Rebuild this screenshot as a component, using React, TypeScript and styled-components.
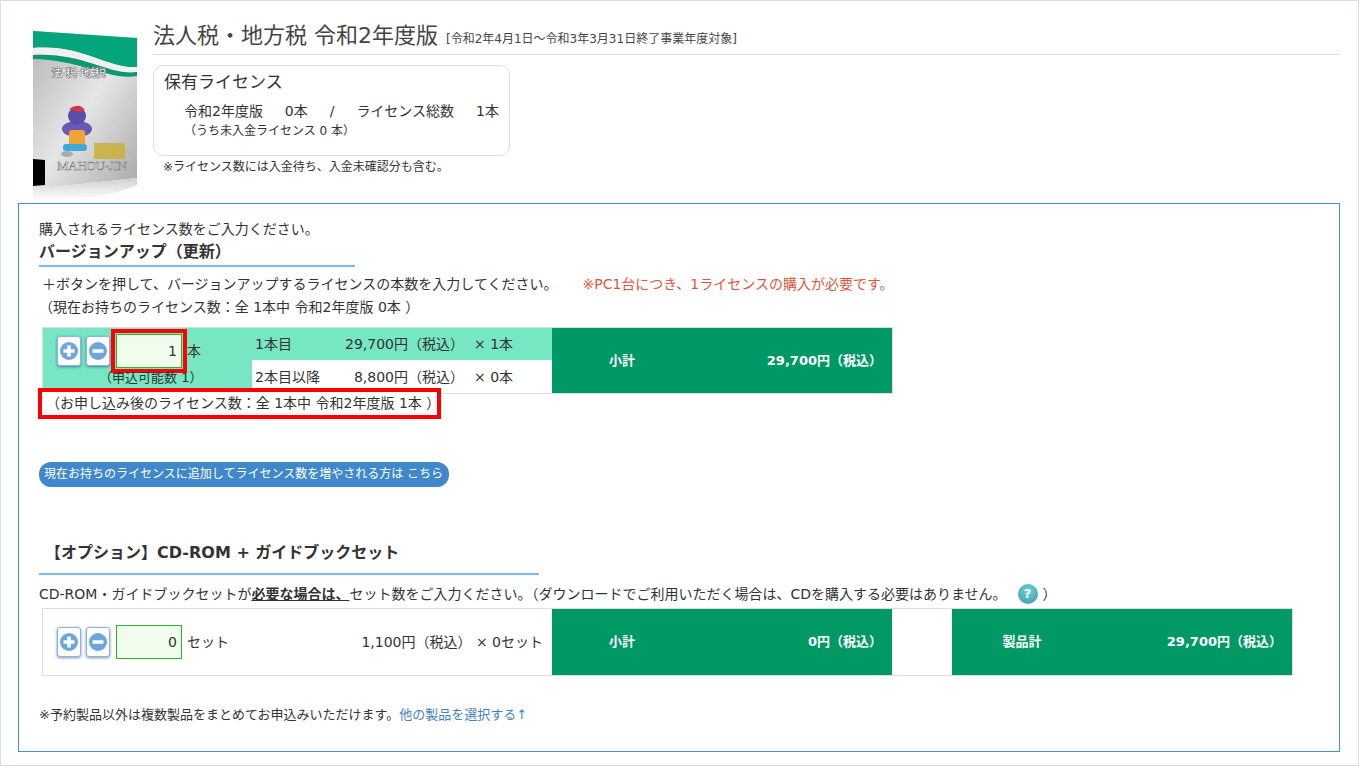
import styled, { createGlobalStyle } from 'styled-components';

const GlobalStyle = createGlobalStyle`
  html, body {
    margin: 0;
    padding: 0;
    background: #fff;
  }
  * {
    box-sizing: border-box;
  }
  body {
    font-family: "DejaVu Sans", "Noto Sans CJK JP", sans-serif;
    font-size: 14px;
    line-height: 20px;
    color: #333;
  }
`;

const Frame = styled.div`
  width: 1359px;
  height: 766px;
  overflow: hidden;
  border: 1px solid #d6dee6;
  padding: 19px 18px 0 17px;
`;

const Header = styled.header`
  display: flex;
  height: 183px;
`;

const BoxArt = styled.svg`
  flex: none;
  width: 104px;
  height: 170px;
  margin: 10px 16px 0 15px;
`;

const HeaderBody = styled.div`
  flex: 1;
`;

const TitleRow = styled.div`
  height: 35px;
  display: flex;
  align-items: baseline;
  gap: 8px;
  padding-top: 2px;
  border-bottom: 1px solid #ddd;
`;

const Title = styled.h1`
  margin: 0;
  font-size: 22px;
  line-height: 28px;
  font-weight: 400;
  color: #444;
`;

const TitleNote = styled.span`
  font-size: 12px;
  color: #444;
`;

const LicenseBox = styled.div`
  width: 357px;
  height: 91px;
  margin-top: 10px;
  padding: 5px 10px;
  border: 1px solid #ddd;
  border-radius: 10px;
`;

const LicenseTitle = styled.div`
  font-size: 17px;
  line-height: 22px;
`;

const LicenseLine = styled.div`
  display: flex;
  justify-content: space-between;
  margin: 7px 0 0 20px;
  line-height: 22px;
`;

const LicenseSub = styled.div`
  margin: 1px 0 0 20px;
  font-size: 12px;
  line-height: 16px;
`;

const LicenseNote = styled.div`
  margin: 1px 0 0 10px;
  font-size: 12px;
`;

const Panel = styled.main`
  height: 549px;
  padding: 15px 20px 0;
  border: 1px solid #3f94d0;
`;

const Lead = styled.p`
  margin: 0;
  line-height: 20px;
`;

const SectionHeading = styled.h2<{ $width: number }>`
  width: ${({ $width }) => $width}px;
  height: 28px;
  margin: 0;
  font-size: 16px;
  line-height: 25px;
  font-weight: 700;
  color: #333;
  border-bottom: 2px solid #7db8ea;
`;

const InstructionRow = styled.div`
  display: flex;
  gap: 25px;
  margin: 7px 0 0 3px;
`;

const Warning = styled.span`
  color: #e2563b;
`;

const CurrentCount = styled.div`
  margin: 3px 0 10px;
`;

const OrderTable = styled.div`
  display: grid;
  grid-template-columns: 209px 300px 340px;
  width: 851px;
  height: 67px;
  margin-left: 3px;
  border: 1px solid #ddd;
  border-top-color: #ddd;
`;

const QuantityCell = styled.div`
  background: #76e6c3;
  padding-top: 6px;
`;

const Controls = styled.div`
  display: flex;
  align-items: center;
  gap: 5px;
  padding-left: 14px;
`;

const StepButton = styled.button`
  flex: none;
  width: 24px;
  height: 30px;
  padding: 0;
  display: grid;
  place-items: center;
  background: #fff;
  border: 1px solid #8db2e4;
  border-radius: 3px;
  box-shadow: 0 1px 3px rgba(40, 70, 110, 0.6);
`;

const QuantityInput = styled.input<{ $highlight?: boolean }>`
  width: 66px;
  height: 34px;
  margin-left: 1px;
  padding: 0 4px;
  font: inherit;
  color: #333;
  text-align: right;
  background: #f0fdec;
  border: 1px solid #2fb52a;
  border-radius: 0;
  outline: ${({ $highlight }) => ($highlight ? '4px solid #f00' : 'none')};
  outline-offset: 1px;
`;

const Unit = styled.span`
  margin-left: 0;
`;

const Available = styled.div`
  margin-top: 1px;
  padding-left: 56px;
  line-height: 18px;
  font-size: 13px;
`;

const PriceCell = styled.div`
  display: grid;
  grid-template-rows: 32px 1fr;
`;

const PriceRow = styled.div<{ $tint?: boolean }>`
  display: grid;
  grid-template-columns: 84px 125px 1fr;
  align-items: center;
  padding-left: 3px;
  background: ${({ $tint }) => ($tint ? '#76e6c3' : '#fff')};
`;

const PriceAmount = styled.span`
  text-align: right;
  white-space: nowrap;
`;

const PriceCount = styled.span`
  padding-left: 10px;
  white-space: nowrap;
`;

const TotalCell = styled.div`
  display: grid;
  grid-template-columns: 140px 1fr;
  align-items: center;
  padding-right: 10px;
  background: #009966;
  color: #fff;
  font-size: 13px;
  font-weight: 700;
`;

const TotalLabel = styled.span`
  text-align: center;
`;

const TotalValue = styled.span`
  text-align: right;
`;

const AfterCount = styled.div`
  position: relative;
  width: 403px;
  height: 31px;
  margin: -6px 0 0 -1px;
  padding: 1px 0 0 4px;
  line-height: 21px;
  border: 4px solid #f00;
  background: #fff;
  white-space: nowrap;
`;

const AddLink = styled.a`
  display: block;
  width: 410px;
  height: 25px;
  margin-top: 43px;
  padding: 0 5px;
  font-size: 12px;
  line-height: 24px;
  color: #fff;
  text-decoration: none;
  white-space: nowrap;
  background: #3f88c9;
  border-radius: 12px;
`;

const OptionSection = styled.section`
  margin-top: 53px;
`;

const OptionHeading = styled(SectionHeading)`
  height: 35px;
  padding-left: 6px;
`;

const OptionLead = styled.div`
  display: flex;
  align-items: center;
  margin-top: 9px;
  white-space: nowrap;
`;

const HelpIcon = styled.span`
  display: inline-grid;
  place-items: center;
  width: 20px;
  height: 20px;
  margin: 0 5px 0 11px;
  color: #fff;
  font-size: 13px;
  font-weight: 700;
  border-radius: 50%;
  background: radial-gradient(circle at 50% 35%, #6fd3d3, #3b97a8);
`;

const OptionTable = styled.div`
  display: grid;
  grid-template-columns: 509px 340px 60px 340px;
  width: 1251px;
  height: 68px;
  margin: 4px 0 0 3px;
  border: 1px solid #ddd;
`;

const OptionQuantity = styled.div`
  display: flex;
  align-items: center;
  padding-left: 14px;
  gap: 5px;
`;

const SetPrice = styled.span`
  margin-left: auto;
  padding-right: 9px;
  white-space: nowrap;
`;

const SetUnit = styled.span`
  margin-left: 0;
`;

const Footnote = styled.p`
  margin: 29px 0 0;
  font-size: 13px;
`;

const FootLink = styled.a`
  color: #3f7fc4;
  text-decoration: none;
`;

function CircleIcon({ minus }: { minus?: boolean }) {
  return (
    <svg width="18" height="18" viewBox="0 0 18 18" aria-hidden="true">
      <circle cx="9" cy="9" r="9" fill="#6ea5dc" />
      <rect x="3.5" y="7.2" width="11" height="3.6" fill="#fff" rx="0.5" />
      {!minus && <rect x="7.2" y="3.5" width="3.6" height="11" fill="#fff" rx="0.5" />}
    </svg>
  );
}

function ProductBox() {
  return (
    <BoxArt viewBox="0 0 104 170" aria-hidden="true">
      <defs>
        <linearGradient id="face" x1="0" y1="0" x2="1" y2="1">
          <stop offset="0" stopColor="#b4b4b4" />
          <stop offset="0.5" stopColor="#e6e6e6" />
          <stop offset="1" stopColor="#a8a8a8" />
        </linearGradient>
        <linearGradient id="reflect" x1="0" y1="0" x2="0" y2="1">
          <stop offset="0" stopColor="#cfcfcf" />
          <stop offset="1" stopColor="#fff" />
        </linearGradient>
      </defs>
      <path d="M0 1 L104 8 V148 L0 159 Z" fill="url(#face)" />
      <path d="M0 1 L104 8 V37 C76 40 50 14 0 18 Z" fill="#04a57c" />
      <path d="M0 18 C50 14 76 40 104 37 V42 C76 46 50 22 0 25 Z" fill="#f0f0f0" />
      <path d="M0 25 C50 22 76 46 104 42 V46 C76 51 50 30 0 29 Z" fill="#0a9a70" />
      <path d="M0 129 L12 130 V155 L0 156 Z" fill="#000" />
      <path d="M0 159 L104 148 V155 C70 170 30 170 0 170 Z" fill="url(#reflect)" />
      <text x="18" y="47" fontSize="11.5" fontWeight="700" fill="#fff" stroke="#555" strokeWidth="0.4" textLength="55">
        法人税・地方税
      </text>
      <ellipse cx="44" cy="99" rx="15" ry="8" fill="#6a57b8" />
      <circle cx="44" cy="86" r="9" fill="#5c4da8" />
      <path d="M36 79 Q46 72 52 80 L46 82 Z" fill="#d8353f" />
      <rect x="36" y="100" width="16" height="17" rx="3" fill="#f0a532" />
      <rect x="30" y="114" width="24" height="7" rx="3" fill="#3fa8d8" />
      <ellipse cx="34" cy="124" rx="6" ry="3" fill="#aaa" />
      <rect x="61" y="113" width="31" height="16" fill="#c9b23a" opacity="0.85" />
      <text x="24" y="140" fontSize="13" fontFamily="Liberation Serif" fill="#f4f4f4" stroke="#777" strokeWidth="0.5" textLength="70">
        MAHOU-JIN
      </text>
    </BoxArt>
  );
}

export default function App() {
  return (
    <Frame>
      <GlobalStyle />
      <Header>
        <ProductBox />
        <HeaderBody>
          <TitleRow>
            <Title>法人税・地方税 令和2年度版</Title>
            <TitleNote>[令和2年4月1日～令和3年3月31日終了事業年度対象]</TitleNote>
          </TitleRow>
          <LicenseBox>
            <LicenseTitle>保有ライセンス</LicenseTitle>
            <LicenseLine>
              <span>令和2年度版</span>
              <span>0本</span>
              <span>/</span>
              <span>ライセンス総数</span>
              <span>1本</span>
            </LicenseLine>
            <LicenseSub>（うち未入金ライセンス 0 本）</LicenseSub>
          </LicenseBox>
          <LicenseNote>※ライセンス数には入金待ち、入金未確認分も含む。</LicenseNote>
        </HeaderBody>
      </Header>

      <Panel>
        <Lead>購入されるライセンス数をご入力ください。</Lead>
        <SectionHeading $width={316}>バージョンアップ（更新）</SectionHeading>
        <InstructionRow>
          <span>＋ボタンを押して、バージョンアップするライセンスの本数を入力してください。</span>
          <Warning>※PC1台につき、1ライセンスの購入が必要です。</Warning>
        </InstructionRow>
        <CurrentCount>（現在お持ちのライセンス数：全 1本中 令和2年度版 0本 ）</CurrentCount>

        <OrderTable>
          <QuantityCell>
            <Controls>
              <StepButton aria-label="増やす">
                <CircleIcon />
              </StepButton>
              <StepButton aria-label="減らす">
                <CircleIcon minus />
              </StepButton>
              <QuantityInput $highlight defaultValue="1" />
              <Unit>本</Unit>
            </Controls>
            <Available>（申込可能数 1）</Available>
          </QuantityCell>
          <PriceCell>
            <PriceRow $tint>
              <span>1本目</span>
              <PriceAmount>29,700円（税込）</PriceAmount>
              <PriceCount>× 1本</PriceCount>
            </PriceRow>
            <PriceRow>
              <span>2本目以降</span>
              <PriceAmount>8,800円（税込）</PriceAmount>
              <PriceCount>× 0本</PriceCount>
            </PriceRow>
          </PriceCell>
          <TotalCell>
            <TotalLabel>小計</TotalLabel>
            <TotalValue>29,700円（税込）</TotalValue>
          </TotalCell>
        </OrderTable>
        <AfterCount>（お申し込み後のライセンス数：全 1本中 令和2年度版 1本 ）</AfterCount>

        <AddLink href="#">現在お持ちのライセンスに追加してライセンス数を増やされる方は こちら</AddLink>

        <OptionSection>
          <OptionHeading $width={500}>【オプション】CD-ROM + ガイドブックセット</OptionHeading>
          <OptionLead>
            CD-ROM・ガイドブックセットが
            <b>
              <u>必要な場合は、</u>
            </b>
            セット数をご入力ください。（ダウンロードでご利用いただく場合は、CDを購入する必要はありません。
            <HelpIcon>?</HelpIcon>）
          </OptionLead>
          <OptionTable>
            <OptionQuantity>
              <StepButton aria-label="増やす">
                <CircleIcon />
              </StepButton>
              <StepButton aria-label="減らす">
                <CircleIcon minus />
              </StepButton>
              <QuantityInput defaultValue="0" />
              <SetUnit>セット</SetUnit>
              <SetPrice>1,100円（税込） × 0セット</SetPrice>
            </OptionQuantity>
            <TotalCell>
              <TotalLabel>小計</TotalLabel>
              <TotalValue>0円（税込）</TotalValue>
            </TotalCell>
            <span />
            <TotalCell>
              <TotalLabel>製品計</TotalLabel>
              <TotalValue>29,700円（税込）</TotalValue>
            </TotalCell>
          </OptionTable>
          <Footnote>
            ※予約製品以外は複数製品をまとめてお申込みいただけます。
            <FootLink href="#">他の製品を選択する↑</FootLink>
          </Footnote>
        </OptionSection>
      </Panel>
    </Frame>
  );
}
